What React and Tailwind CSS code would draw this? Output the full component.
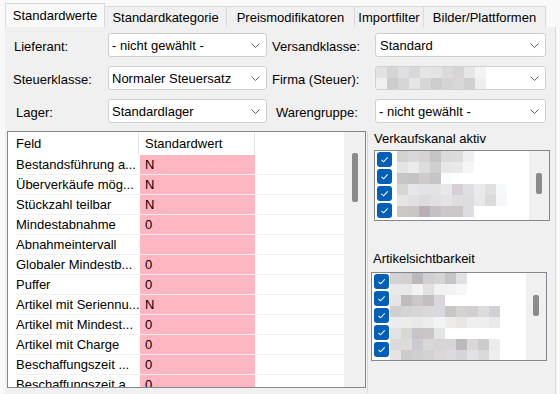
import React from "react";

const felder = [
    ["Bestandsführung a...", "N"],
    ["Überverkäufe mög...", "N"],
    ["Stückzahl teilbar", "N"],
    ["Mindestabnahme", "0"],
    ["Abnahmeintervall", ""],
    ["Globaler Mindestb...", "0"],
    ["Puffer", "0"],
    ["Artikel mit Seriennu...", "N"],
    ["Artikel mit Mindest...", "0"],
    ["Artikel mit Charge", "0"],
    ["Beschaffungszeit ...", "0"],
    ["Beschaffungszeit a...", "0"],
];

// blurred (pixelated) entries, as in the screenshot
const kanalMosaic = [
    ["#d4d2d0", "#d8d8da", "#d6d3d3", "#c7c4c6", "#dadada", "#dcdcdc", "#efeff3"],
    ["#e4e4e4", "#ebebeb", "#dedcdb", "#cfcfcf", "#e7e7e8", "#e9e9ea", "#f6f6f7"],
    ["#c8c5c6", "#c3c2c4", "#cdcbcc", "#c6c4c6", "#fbfcfe"],
    ["#d6d6d4", "#e5e6ea", "#e3e3e7", "#e5e2e5", "#e8e8e6", "#d8ced6", "#dfdfe3", "#eaeaea", "#e1dfe1", "#f7f8fa"],
    ["#e6e5e4", "#e0e0e3", "#dcdcde", "#e3e0e3", "#e4e4e6", "#e0dde1", "#dcdcde", "#e8e8e8", "#dbdbdb", "#f6f6f8"],
    ["#cbc7c6", "#c9c6c6", "#b8afb7", "#c5c0c4", "#c9c9cc", "#ccc8c8", "#dcdde0"],
];

const sichtMosaic = [
    ["#d6d2d3", "#d3cfd0", "#bcb9bd", "#d1cfd0", "#d5d6d4", "#c7c4c8", "#e2e0e4"],
    ["#e9e9e9", "#e8e8e8", "#f3f3f3", "#e2e0e2", "#f2f2f2", "#f3f3f3", "#f7f7f7"],
    ["#e5e5e5", "#bebcbe", "#cbc7c8", "#c1bfc1", "#d9d7dc"],
    ["#d1cfcf", "#d4d4d4", "#d6d6d6", "#dad9d8", "#d9d8de", "#c9c7c4", "#d6d0d3", "#d3cfd1", "#dcdcdc", "#d1d0d6"],
    ["#ececec", "#ececec", "#e9e9ea", "#eceeec", "#f1f3f5", "#eeece9", "#e8e5e7", "#efefef", "#eeeeee", "#e9e9eb"],
    ["#e4e3e3", "#d6d8d4", "#c7c5ca", "#cbc6c4", "#e4e3e6"],
    ["#dbd9db", "#dddcda", "#cccad1", "#d9d7d9", "#d8d3d5", "#d6d6d8", "#bcb8bc", "#dad7d9", "#cdcacb", "#ebebeb"],
    ["#e5e4e4", "#cdcbcb", "#cfcfd1", "#d3d1d2", "#dad7d9", "#dbdbdd", "#d6d4d6", "#e2e2e4", "#dadada", "#eeeeee"],
];

const firmaMosaic = [
    ["#e2e2e2", "#d7d4d6", "#dfdfe1", "#d6d9dc", "#e5e5e6", "#e3e3e4", "#dcdadb", "#d6d4d6", "#e6e5e7", "#f3f3f4", "#ffffff"],
    ["#f1f0ef", "#cdcdcd", "#d6d6d6", "#e6e6e6", "#d6d6d6", "#cecccc", "#d4d4d4", "#d9d8d8", "#d2cfcf", "#ecedef", "#ffffff"],
];

function Mosaic({ rows, cell = "h-[11px]" }) {
    return (
        <div className="flex flex-col">
            {rows.map((row, i) => (
                <div key={i} className="flex">
                    {row.map((c, j) => (
                        <div key={j} className={`w-[11px] ${cell}`} style={{ backgroundColor: c }} />
                    ))}
                </div>
            ))}
        </div>
    );
}

function Chevron() {
    return (
        <svg width="9" height="5" viewBox="0 0 9 5" className="shrink-0">
            <path d="M0.5 0.5 L4.5 4.5 L8.5 0.5" fill="none" stroke="#606060" strokeWidth="1" />
        </svg>
    );
}

function Select({ width, children }) {
    return (
        <div className={`${width} h-[24px] bg-white border border-[#d0d0d0] rounded-[3px] flex items-center justify-between pr-[6px] overflow-hidden`}>
            <div className="pl-[3px] whitespace-nowrap">{children}</div>
            <Chevron />
        </div>
    );
}

function Checkbox() {
    return (
        <div className="w-[15px] h-[15px] rounded-[3px] bg-[#005fb8] flex items-center justify-center">
            <svg width="11" height="11" viewBox="0 0 11 11">
                <path d="M2.5 5.8 L4.6 7.8 L8.7 3.4" fill="none" stroke="white" strokeWidth="1.1" />
            </svg>
        </div>
    );
}

function ListBox({ count, mosaic, height, gap, scrollTop }) {
    return (
        <div className={`w-[176px] ${height} bg-white border border-[#828790] flex overflow-hidden`}>
            <div className="flex-1 flex">
                <div className="pl-[2px] pt-[1px] flex flex-col gap-[2px]">
                    {Array.from({ length: count }).map((_, i) => (
                        <Checkbox key={i} />
                    ))}
                </div>
                <div className={gap}>
                    <Mosaic rows={mosaic} />
                </div>
            </div>
            <div className={`w-[20px] bg-[#f0f0f0] flex justify-center ${scrollTop}`}>
                <div className="w-[6px] h-[21px] bg-[#8b8b8b] rounded-[2px]" />
            </div>
        </div>
    );
}

export default function App() {
    const tabs = [
        { name: "Standardkategorie", w: "w-[122px]" },
        { name: "Preismodifikatoren", w: "w-[128px]" },
        { name: "Importfilter", w: "w-[69px]" },
        { name: "Bilder/Plattformen", w: "w-[122px]" },
    ];

    return (
        <div className="w-[560px] h-[394px] overflow-hidden bg-[#f9f9f9] text-[13px] text-black font-['Liberation_Sans',Arial,sans-serif] leading-none">
            {/* Tabs */}
            <div className="flex items-end h-[27px] pl-[5px]">
                <div className="w-[100px] h-[24px] bg-[#f9f9f9] border border-b-0 border-[#d9d9d9] flex items-center justify-center pb-[1px]">
                    Standardwerte
                </div>
                {tabs.map((t) => (
                    <div
                        key={t.name}
                        className={`${t.w} h-[21px] bg-[#f0f0f0] border-t border-r border-[#d9d9d9] flex items-center justify-center`}
                    >
                        {t.name}
                    </div>
                ))}
            </div>

            {/* Tab page */}
            <div className="ml-[5px] w-[551px] h-[367px] bg-[#f0f0f0] border-r border-[#d9d9d9]">
                <div className="pt-[6px] pl-[9px] flex flex-col gap-[9px]">
                    <div className="flex items-center h-[24px]">
                        <div className="w-[94px] pt-[2px]">Lieferant:</div>
                        <Select width="w-[159px]">- nicht gewählt -</Select>
                        <div className="w-[108px] pl-[5px] pt-[2px]">Versandklasse:</div>
                        <Select width="w-[171px]"><span className="pl-[1px]">Standard</span></Select>
                    </div>
                    <div className="flex items-center h-[24px]">
                        <div className="w-[94px] pt-[2px] -ml-[1px] mr-[1px]">Steuerklasse:</div>
                        <Select width="w-[159px]">Normaler Steuersatz</Select>
                        <div className="w-[108px] pl-[5px] pt-[2px]">Firma (Steuer):</div>
                        <div className="w-[171px] h-[24px] bg-white border border-[#d0d0d0] rounded-[3px] flex items-center justify-between pr-[6px] overflow-hidden">
                            <Mosaic rows={firmaMosaic} />
                            <Chevron />
                        </div>
                    </div>
                    <div className="flex items-center h-[24px]">
                        <div className="w-[94px] pl-[2px] pt-[2px]">Lager:</div>
                        <Select width="w-[159px]">Standardlager</Select>
                        <div className="w-[108px] pl-[9px] pt-[2px]">Warengruppe:</div>
                        <Select width="w-[171px]">- nicht gewählt -</Select>
                    </div>
                </div>

                <div className="mt-[8px] flex">
                    {/* Grid */}
                    <div className="ml-[2px] w-[359px] h-[257px] bg-white border border-[#828790] flex overflow-hidden">
                        <div className="w-[336px] flex flex-col">
                            <div className="flex h-[23px] shrink-0">
                                <div className="w-[131px] pl-[8px] border-r border-[#e5e5e5] flex items-center">Feld</div>
                                <div className="w-[116px] pl-[6px] border-r border-[#e5e5e5] flex items-center">Standardwert</div>
                            </div>
                            {felder.map(([feld, wert]) => (
                                <div key={feld} className="ml-[7px] flex h-[20px] shrink-0 border-b border-[#f0f0f0]">
                                    <div className="w-[125px] pl-[1px] flex items-center whitespace-nowrap overflow-hidden">{feld}</div>
                                    <div className="w-[115px] pl-[5px] bg-[#ffb6c1] flex items-center">{wert}</div>
                                </div>
                            ))}
                        </div>
                        <div className="flex-1 bg-[#f0f0f0] flex justify-center pt-[21px]">
                            <div className="w-[6px] h-[49px] bg-[#8b8b8b] rounded-[2px]" />
                        </div>
                    </div>

                    {/* Right column */}
                    <div className="ml-[1px] border-l border-[#d9d9d9] h-[262px] flex flex-col">
                        <div className="pl-[6px] h-[14px] flex items-center">Verkaufskanal aktiv</div>
                        <div className="ml-[6px] mt-[5px]">
                            <ListBox count={4} mosaic={kanalMosaic} height="h-[71px]" gap="ml-[5px]" scrollTop="pt-[22px]" />
                        </div>
                        <div className="pl-[5px] mt-[30px] h-[14px] flex items-center">Artikelsichtbarkeit</div>
                        <div className="ml-[3px] mt-[7px]">
                            <ListBox count={5} mosaic={sichtMosaic} height="h-[89px]" gap="ml-[1px]" scrollTop="pt-[22px]" />
                        </div>
                    </div>
                </div>
            </div>
        </div>
    );
}
